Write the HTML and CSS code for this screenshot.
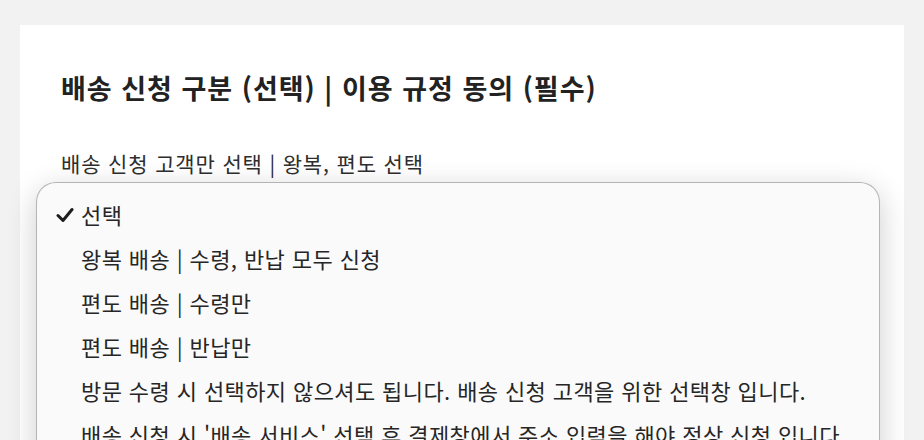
FILE: index.html
```html
<!DOCTYPE html>
<html lang="ko">
<head>
<meta charset="utf-8">
<link rel="stylesheet" href="styles.css">
</head>
<body>
<main class="card">
  <h1 class="title">배송 신청 구분 (선택) | 이용 규정 동의 (필수)</h1>
  <p class="sub">배송 신청 고객만 선택 | 왕복, 편도 선택</p>
  <div class="select-box">
    <span class="select-arrow"></span>
  </div>
</main>
<div class="menu" role="listbox">
  <div class="item selected"><svg class="check" width="18" height="16" viewBox="0 0 18 16"><path d="M2 8.5 L7 13.5 L16 2.5" fill="none" stroke="#1e1e1e" stroke-width="3" stroke-linecap="round" stroke-linejoin="round"/></svg><span>선택</span></div>
  <div class="item">왕복 배송 | 수령, 반납 모두 신청</div>
  <div class="item">편도 배송 | 수령만</div>
  <div class="item">편도 배송 | 반납만</div>
  <div class="item">방문 수령 시 선택하지 않으셔도 됩니다. 배송 신청 고객을 위한 선택창 입니다.</div>
  <div class="item">배송 신청 시 '배송 서비스' 선택 후 결제창에서 주소 입력을 해야 정상 신청 입니다.</div>
</div>
</body>
</html>
```

FILE: styles.css
```css
html, body {
  margin: 0;
  padding: 0;
}
body {
  background: #f2f2f2;
  font-family: "Noto Sans CJK KR", "Noto Sans", sans-serif;
  color: #222;
  height: 440px;
  overflow: hidden;
}
.card {
  margin: 25px 20px 0;
  background: #fff;
  height: 415px;
  padding: 0 41px;
  box-sizing: border-box;
  overflow: hidden;
}
.title {
  margin: 0;
  padding-top: 43px;
  font-size: 27px;
  font-weight: 700;
  letter-spacing: 1px;
  line-height: 40px;
  color: #222;
}
.sub {
  margin: 40px 0 0;
  font-size: 21px;
  letter-spacing: 0.85px;
  line-height: 30px;
  color: #2e2e2e;
}
.select-box {
  margin-top: 18px;
  height: 46px;
  border-radius: 8px;
  background: #f4f4f4;
  display: flex;
  align-items: center;
  justify-content: flex-end;
  padding: 0 20px;
}
.select-arrow {
  width: 30px;
  height: 30px;
  border-radius: 50%;
  background: #eee;
}
.menu {
  position: absolute;
  left: 36px;
  top: 182px;
  width: 844px;
  height: 300px;
  box-sizing: border-box;
  border: 1px solid rgba(0, 0, 0, 0.28);
  border-radius: 20px;
  background: rgba(250, 250, 250, 0.97);
  box-shadow: 0 8px 30px rgba(0, 0, 0, 0.2);
  padding: 9px 0 0 44px;
}
.item {
  position: relative;
  height: 44px;
  line-height: 44px;
  font-size: 22px;
  letter-spacing: 0.4px;
  color: #262626;
  white-space: nowrap;
}
.check {
  position: absolute;
  left: -25px;
  top: 15px;
}
```
